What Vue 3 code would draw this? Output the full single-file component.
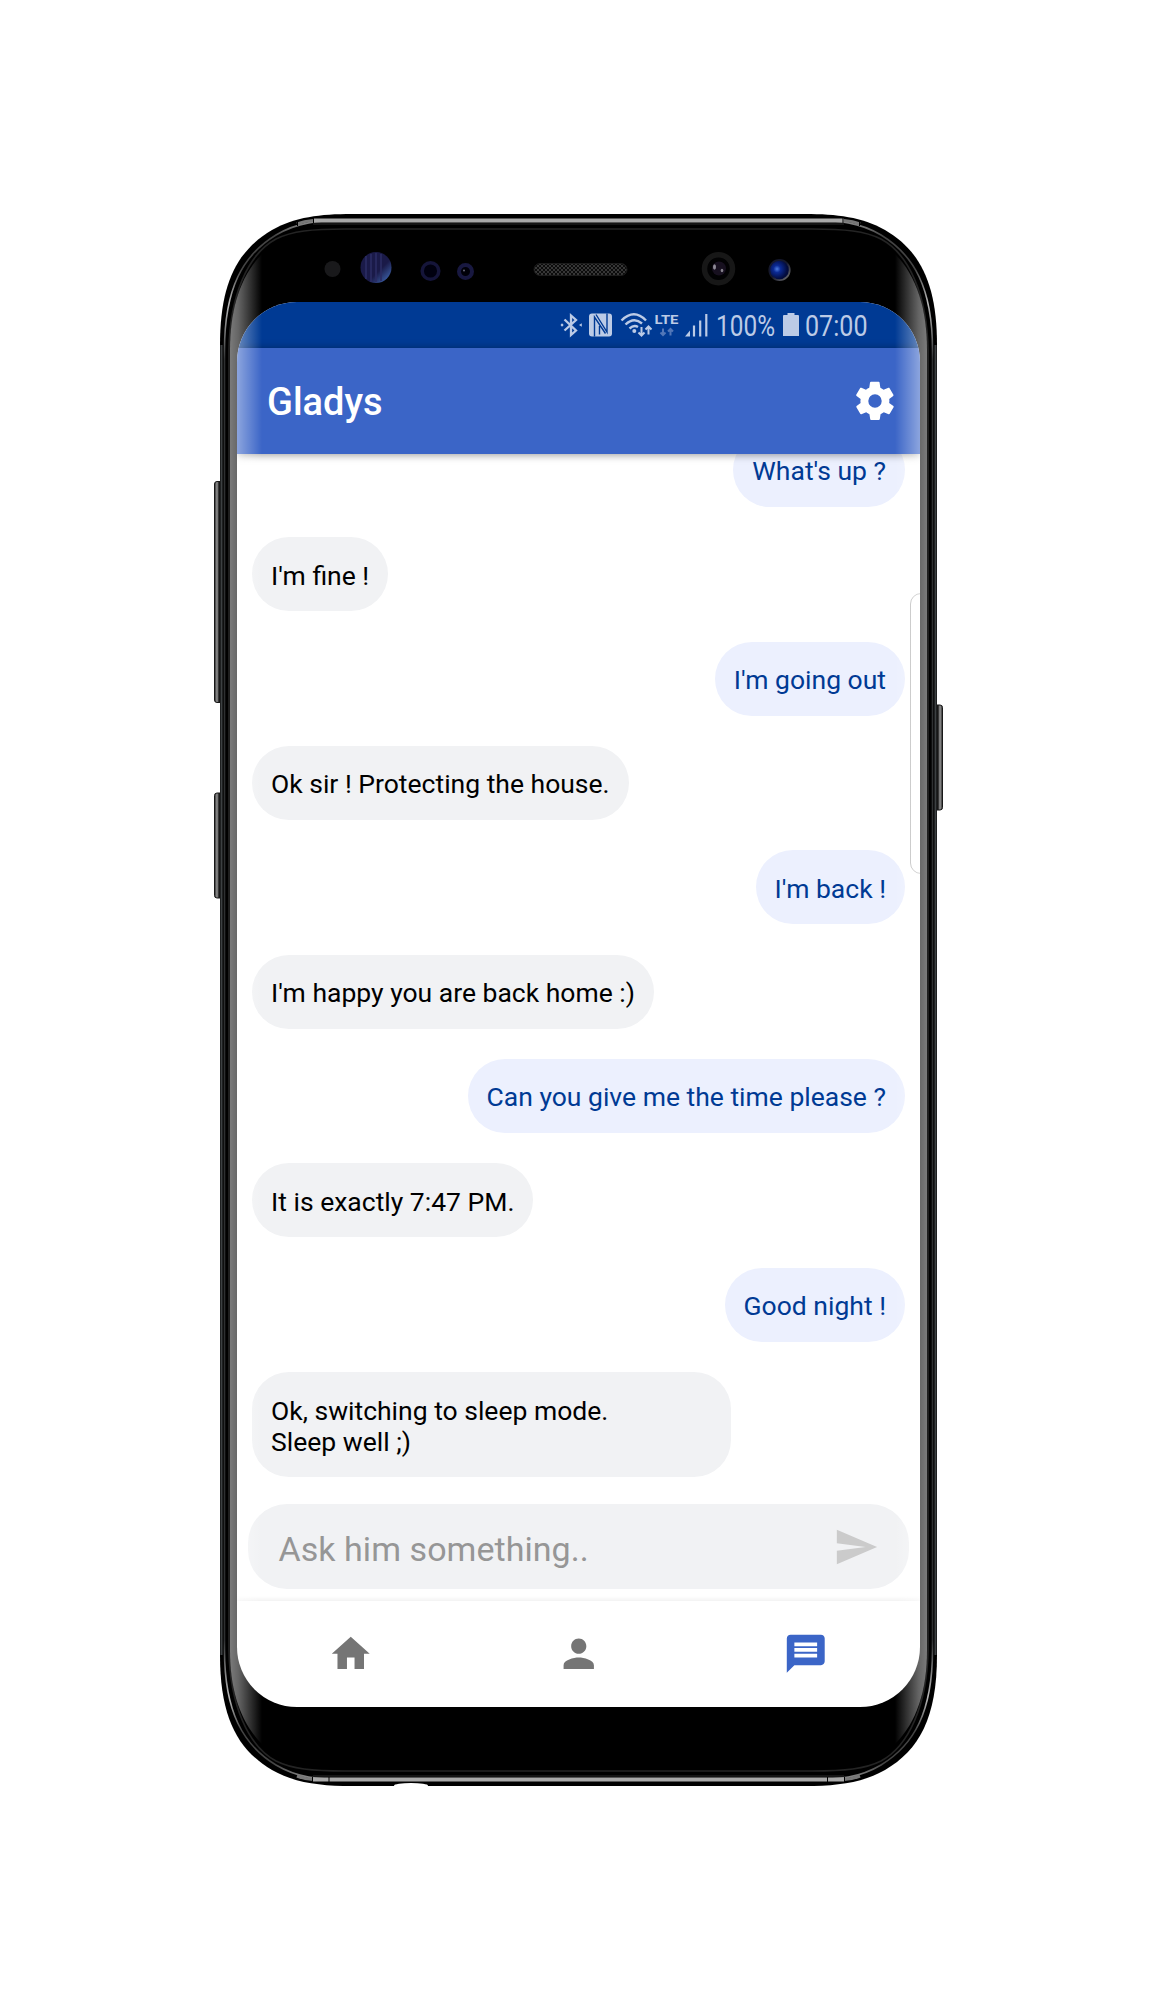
<script setup>
const messages = [
  { mine: true, text: "What's up ?" },
  { mine: false, text: "I'm fine !" },
  { mine: true, text: "I'm going out" },
  { mine: false, text: 'Ok sir ! Protecting the house.' },
  { mine: true, text: "I'm back !" },
  { mine: false, text: "I'm happy you are back home :)" },
  { mine: true, text: 'Can you give me the time please ?' },
  { mine: false, text: 'It is exactly 7:47 PM.' },
  { mine: true, text: 'Good night !' },
  { mine: false, full: true, text: 'Ok, switching to sleep mode.\nSleep well ;)' },
]

// One quarter of the case outline is drawn and mirrored to the other corners.
const corners = [
  'matrix(1 0 0 1 0 0)',
  'matrix(-1 0 0 1 1157 0)',
  'matrix(1 0 0 -1 0 2000)',
  'matrix(-1 0 0 -1 1157 2000)',
]
</script>

<template>
  <main class="stage">
    <svg class="frame" viewBox="0 0 1157 2000" width="1157" height="2000" fill="none">
      <defs>
        <linearGradient id="key" x1="0" x2="1">
          <stop offset="0" stop-color="#222" />
          <stop offset=".25" stop-color="#999" />
          <stop offset=".45" stop-color="#151515" />
          <stop offset="1" stop-color="#2a2a2a" />
        </linearGradient>
        <linearGradient id="keyR" x1="1" x2="0">
          <stop offset="0" stop-color="#222" />
          <stop offset=".25" stop-color="#999" />
          <stop offset=".45" stop-color="#151515" />
          <stop offset="1" stop-color="#2a2a2a" />
        </linearGradient>
        <linearGradient id="shine" gradientUnits="userSpaceOnUse" x1="0" y1="219" x2="0" y2="360">
          <stop offset="0" stop-color="#999" />
          <stop offset=".12" stop-color="#444" />
          <stop offset=".35" stop-color="#444" />
          <stop offset=".6" stop-color="#bbb" />
          <stop offset="1" stop-color="#2e3031" />
        </linearGradient>
        <linearGradient id="lens" x1="0" y1="0" x2="1" y2="1">
          <stop offset=".6" stop-color="#1a1a48" />
          <stop offset=".85" stop-color="#365496" />
        </linearGradient>
        <linearGradient id="rim" x1="0" y1="0" x2="1" y2="1">
          <stop offset=".5" stop-color="#15182c" />
          <stop offset="1" stop-color="#777" />
        </linearGradient>
        <radialGradient id="iris" cx=".38" cy=".45">
          <stop offset="0" stop-color="#4d7be0" />
          <stop offset=".35" stop-color="#0b2a94" />
          <stop offset="1" stop-color="#020b3c" />
        </radialGradient>
        <pattern id="mesh" width="4" height="4" patternUnits="userSpaceOnUse">
          <rect width="4" height="4" fill="#0c0c0c" />
          <path d="M0 0l4 4M4 0L0 4" stroke="#3c3c3c" stroke-width=".9" />
        </pattern>
        <g id="quarter">
          <path d="M579 214H352C320 214 295 217 272 230C238 250 220 282 220 345V1000H579Z" fill="#000" />
          <path d="M221.500 1000V345" stroke="#3c4042" stroke-width="2" />
          <path d="M224.500 1000V350C224.500 288 243 255 276 235C298 222 318 220.500 345 220.500" stroke="url(#shine)" stroke-width="1.600" />
          <path d="M579 220.500H313" stroke="#a9a9a9" stroke-width="4" />
          <path d="M313 220.500Q304 221 297 224" stroke="#777" stroke-width="3" />
          <path d="M579 224H313" stroke="#2a2a2a" />
          <path d="M579 229H345C312 229 292 231 276 239C248 254 230 295 229 350V1000" stroke="#242424" stroke-width="1.700" />
        </g>
      </defs>
      <rect x="214.500" y="481.500" width="10" height="221" rx="2.500" fill="url(#key)" stroke="#181818" />
      <rect x="214.500" y="793" width="10" height="105" rx="2.500" fill="url(#key)" stroke="#181818" />
      <rect x="932.500" y="705" width="10" height="105" rx="2.500" fill="url(#keyR)" stroke="#181818" />
      <use v-for="c in corners" :key="c" href="#quarter" :transform="c" />
      <path d="M313.500 217v6M843 217v6M297.500 221v5M859.500 221v5M312.500 1777v6M329 1777v6M827.500 1777v6M844.500 1777v6" stroke="#000" />
      <ellipse cx="411" cy="1785.500" rx="17" ry="2.500" fill="#fff" />

      <circle cx="332.500" cy="269" r="8" fill="#19191b" />
      <circle cx="376" cy="267.500" r="15.500" fill="url(#lens)" />
      <path d="M366 256v23M371 254v28M376 253v29M381 254v27" stroke="#2b2c63" stroke-width="1.600" />
      <circle cx="430.500" cy="271" r="8.300" fill="#00000f" stroke="#15153a" stroke-width="3.500" />
      <circle cx="465.500" cy="271.500" r="6.500" fill="#000008" stroke="#181840" stroke-width="4" />
      <circle cx="464" cy="270.500" r="1" fill="#667" />
      <rect x="534" y="263.500" width="93" height="12" rx="6" fill="url(#mesh)" stroke="#1c1c1c" />
      <circle cx="718.500" cy="268.700" r="14" fill="#020203" stroke="#171717" stroke-width="5.500" />
      <circle cx="719" cy="268.500" r="7" fill="#17101f" />
      <ellipse cx="714.500" cy="267" rx="1.500" ry="2.700" fill="#8e8b96" />
      <ellipse cx="722" cy="270.500" rx="1.300" ry="1.800" fill="#85818b" />
      <circle cx="779.500" cy="270" r="10.200" fill="url(#iris)" stroke="url(#rim)" stroke-width="1.800" />
    </svg>

    <section class="screen">
      <div class="status">
        <svg class="glyphs" width="148" height="28" viewBox="0 0 148 28" fill="none" stroke="#bccbe6" stroke-width="2">
          <path d="M4.500 8.500L16 19.500L11 24V4.500L16 9L4.500 19.500" stroke-width="2.300" />
          <path d="M.5 14l1.500-1.700L3.700 14 2 15.700zM21.800 15.700L19 14l2.800-1.700z" fill="#bccbe6" stroke="none" />
          <rect x="29" y="2.500" width="23" height="23" rx="3" fill="#bccbe6" stroke="none" />
          <path d="M34.500 25.500V6L45.500 22.500M47 2.500V21L36 3.500M39.500 15v8.500" stroke="#003a94" stroke-width="1.400" />
          <path d="M61.500 9.500Q74-3 86 9.500M65.500 13.500Q74 5.500 82 12.500M69.500 17.500Q74 13.500 78 16" stroke-width="2.400" />
          <circle cx="74.300" cy="20" r="2" fill="#bccbe6" stroke="none" />
          <path d="M81.500 16v8M78.500 21.500l3 3 3-3M88.500 23.500v-8M85.500 18.500l3-3 3 3" />
          <path d="M103 17.500v6.500M100.500 21.500l2.500 2.500 2.500-2.500M110.500 24.500V18M108 20.500l2.500-2.500 2.500 2.500" stroke="#5277b8" />
          <path d="M130 25.500v-6l-5 6z" fill="#bccbe6" stroke="none" />
          <path d="M134 14.500v11M140.200 9.500v16M146.300 3v22.500" stroke-width="2.200" />
          <text x="94.500" y="13.300" textLength="24" lengthAdjust="spacingAndGlyphs" class="lte">LTE</text>
        </svg>
        <svg width="58" height="28" viewBox="0 0 58 28" class="digits">
          <text x="-1" y="25.300" textLength="59" lengthAdjust="spacingAndGlyphs">100%</text>
        </svg>
        <svg class="battery" width="16" height="23" viewBox="0 0 16 23">
          <path d="M4.500 0h7v2H15q1 0 1 1v20H0V3q0-1 1-1h3.500z" fill="#bccbe6" />
        </svg>
        <svg width="62" height="28" viewBox="0 0 62 28" class="digits">
          <text x="-1" y="25.300" textLength="62.500" lengthAdjust="spacingAndGlyphs">07:00</text>
        </svg>
      </div>

      <header class="bar">
        <h1>Gladys</h1>
        <svg width="46" height="46" viewBox="0 0 24 24" fill="#fff">
          <path d="M19.400 13c0-.3.100-.6.100-1s0-.7-.1-1l2.100-1.600c.2-.2.200-.4.100-.6l-2-3.500c-.1-.2-.3-.3-.6-.2l-2.500 1c-.5-.4-1.100-.7-1.700-1l-.4-2.600c0-.3-.2-.5-.5-.5h-4c-.2 0-.4.200-.5.400L9 5.100c-.6.200-1.100.6-1.700 1l-2.400-1c-.3-.1-.6 0-.7.200l-2 3.500c-.1.200 0 .5.200.6L4.500 11c0 .3-.1.600-.1 1s0 .7.100 1l-2.100 1.600c-.2.200-.2.400-.1.600l2 3.500c.1.200.3.300.6.200l2.500-1c.5.400 1.100.7 1.700 1l.4 2.600c0 .2.200.4.500.4h4c.2 0 .4-.2.500-.4l.4-2.600c.6-.2 1.100-.6 1.700-1l2.500 1c.2.100.5 0 .6-.2l2-3.500c.1-.2.100-.5-.1-.6L19.400 13zM12 15.500a3.500 3.500 0 1 1 0-7 3.500 3.500 0 0 1 0 7z" />
        </svg>
      </header>

      <div class="chat">
        <p v-for="(m, i) in messages" :key="i" class="bubble" :class="{ mine: m.mine, full: m.full }">{{ m.text }}</p>
      </div>

      <div class="ask">
        <span>Ask him something..</span>
        <svg width="46" height="46" viewBox="0 0 24 24" fill="#cbcbcb">
          <path d="M2.010 21L23 12 2.010 3 2 10l15 2-15 2z" />
        </svg>
      </div>

      <nav class="tabs">
        <svg width="45.500" height="45.500" viewBox="0 0 24 24" fill="#757575">
          <path d="M10 20v-6h4v6h5v-8h3L12 3 2 12h3v8z" />
        </svg>
        <svg width="45.500" height="45.500" viewBox="0 0 24 24" fill="#757575">
          <path d="M12 12c2.210 0 4-1.790 4-4s-1.790-4-4-4-4 1.790-4 4 1.790 4 4 4zm0 2c-2.670 0-8 1.340-8 4v2h16v-2c0-2.660-5.330-4-8-4z" />
        </svg>
        <svg width="45.500" height="45.500" viewBox="0 0 24 24" fill="#3b65c7">
          <path d="M20 2H4c-1.100 0-1.990.9-1.990 2L2 22l4-4h14c1.100 0 2-.9 2-2V4c0-1.100-.9-2-2-2zm-2 12H6v-2h12v2zm0-3H6V9h12v2zm0-3H6V6h12v2z" />
        </svg>
      </nav>
      <div class="edge"></div>
    </section>

    <svg class="frame gloss" viewBox="0 0 1157 2000" width="1157" height="2000">
      <defs>
        <linearGradient id="gl" gradientUnits="userSpaceOnUse" x1="230" x2="262" y1="0" y2="0">
          <stop offset="0" stop-color="#fff" stop-opacity=".48" />
          <stop offset=".25" stop-color="#fff" stop-opacity=".4" />
          <stop offset="1" stop-color="#fff" stop-opacity="0" />
        </linearGradient>
        <linearGradient id="gr" gradientUnits="userSpaceOnUse" x1="927" x2="895" y1="0" y2="0">
          <stop offset="0" stop-color="#fff" stop-opacity=".48" />
          <stop offset=".25" stop-color="#fff" stop-opacity=".4" />
          <stop offset="1" stop-color="#fff" stop-opacity="0" />
        </linearGradient>
      </defs>
      <path d="M262 254C240 276 230 310 230 350V1650C230 1690 240 1722 262 1744Z" fill="url(#gl)" />
      <path d="M895 254C917 276 927 310 927 350V1650C927 1690 917 1722 895 1744Z" fill="url(#gr)" />
    </svg>
  </main>
</template>

<style>
body {
  margin: 0;
  background: #fff;
}
</style>

<style scoped>
.stage {
  position: relative;
  box-sizing: border-box;
  width: 1157px;
  height: 2000px;
  padding: 302px 237px 293px;
  overflow: hidden;
  background: #fff;
  font-family: Roboto, sans-serif;
}
.frame {
  position: absolute;
  inset: 0;
}
.gloss {
  pointer-events: none;
}
.screen {
  position: relative;
  isolation: isolate;
  display: flex;
  flex-direction: column;
  width: 683px;
  height: 1405px;
  border-radius: 60px;
  overflow: hidden;
  background: #fff;
}
.status {
  display: flex;
  flex: none;
  align-items: center;
  height: 45.500px;
  box-sizing: border-box;
  padding-right: 52px;
  justify-content: flex-end;
  background: #003a94;
}
.glyphs {
  margin-right: 9.500px;
}
.lte {
  font: 700 13.700px Roboto, sans-serif;
  fill: #bccbe6;
  stroke: none;
}
.digits {
  overflow: visible;
  fill: #bccbe6;
  font-size: 29px;
}
.battery {
  margin: 0 7px 0 8px;
}
.bar {
  position: relative;
  z-index: 1;
  display: flex;
  flex: none;
  align-items: center;
  justify-content: space-between;
  height: 106.500px;
  box-sizing: border-box;
  padding: 0 22.500px 0 30px;
  background: #3b65c7;
  box-shadow: 0 1px 8px rgba(0, 0, 0, 0.4);
}
.bar h1 {
  margin: 3px 0 0;
  color: #fff;
  font-size: 38px;
  font-weight: 500;
}
.chat {
  display: flex;
  flex: 1;
  flex-direction: column;
  justify-content: flex-end;
  align-items: flex-start;
  gap: 30.350px;
  min-height: 0;
  padding: 0 15px 27px;
}
.bubble {
  box-sizing: border-box;
  flex: none;
  max-width: 478.500px;
  margin: 0;
  padding: 22.500px 19px 20.500px;
  border-radius: 37px;
  background: #f1f2f4;
  color: #000;
  font-size: 26.500px;
  line-height: 31px;
  white-space: pre-line;
}
.full {
  width: 478.500px;
}
.mine {
  align-self: flex-end;
  background: #ecf0fe;
  color: #003a94;
}
.ask {
  display: flex;
  flex: none;
  align-items: center;
  justify-content: space-between;
  height: 85px;
  margin: 0 11px;
  box-sizing: border-box;
  padding: 0 30px 0 30.500px;
  border-radius: 39px;
  background: #f1f2f4;
  color: #969696;
  font-size: 34px;
  letter-spacing: 0.05px;
}
.ask span {
  padding-top: 4px;
}
.tabs {
  display: flex;
  flex: none;
  align-items: center;
  justify-content: space-around;
  height: 106px;
  margin-top: 12px;
  box-shadow: 0 -2px 4px rgba(0, 0, 0, 0.06);
}
.edge {
  position: absolute;
  top: 291px;
  right: -12px;
  width: 20px;
  height: 279px;
  border: 1px solid #bbb;
  border-radius: 12px;
}
</style>
